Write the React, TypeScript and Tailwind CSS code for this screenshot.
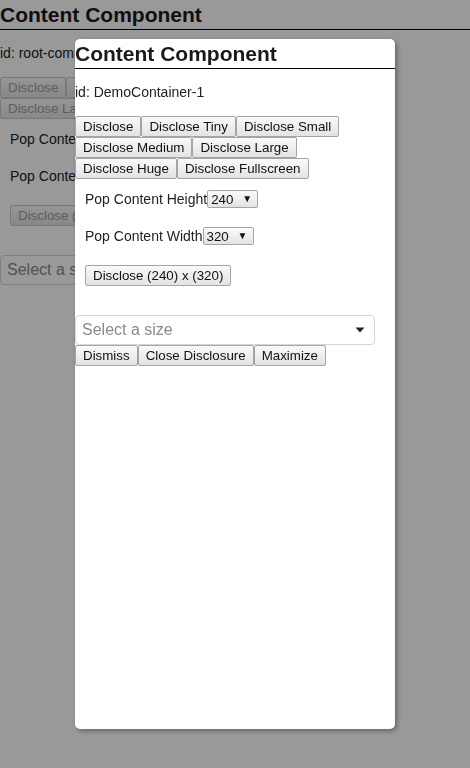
import React from "react";

const FONT = "font-['Liberation_Sans',Arial,sans-serif]";

function Btn({ children, disabled }: { children: React.ReactNode; disabled?: boolean }) {
  return (
    <button
      className={
        "h-[21px] px-[7px] py-0 border rounded-[2px] text-[13.33px] leading-[15px] whitespace-nowrap bg-gradient-to-b from-[#fafafa] to-[#e3e3e3] " +
        FONT +
        (disabled ? " border-[#c8c8c8] text-[#9c9c9c]" : " border-[#a5a5a5] text-[#111]")
      }
    >
      {children}
    </button>
  );
}

function MiniSelect({ value }: { value: string }) {
  return (
    <div className="flex h-[18px] w-[51px] items-center justify-between rounded-[2px] border border-[#a5a5a5] bg-gradient-to-b from-[#fafafa] to-[#e3e3e3] pl-[3px] pr-[5px] text-[13.33px] leading-[15px] text-[#111]">
      <span>{value}</span>
      <span className="text-[10px] leading-[10px]">▼</span>
    </div>
  );
}

function Content({ id, disabled, actions }: { id: string; disabled?: boolean; actions?: boolean }) {
  return (
    <div className={"text-[#222] " + FONT}>
      <div className="h-[30px] border-b border-black pt-[3px] text-[21px] font-bold leading-[24px] text-[#1a1a1a] whitespace-nowrap">
        Content Component
      </div>
      <div className="mt-[15px] text-[14px] leading-[16px] whitespace-nowrap">id: {id}</div>
      <div className="mt-[16px] flex flex-wrap">
        <Btn disabled={disabled}>Disclose</Btn>
        <Btn disabled={disabled}>Disclose Tiny</Btn>
        <Btn disabled={disabled}>Disclose Small</Btn>
        <Btn disabled={disabled}>Disclose Medium</Btn>
        <Btn disabled={disabled}>Disclose Large</Btn>
        <Btn disabled={disabled}>Disclose Huge</Btn>
        <Btn disabled={disabled}>Disclose Fullscreen</Btn>
      </div>
      <div className="pl-[10px] pt-[11px] text-[14px] leading-[16px]">
        <div className="flex h-[18px] items-center whitespace-nowrap">
          <span>Pop Content Height</span>
          <MiniSelect value="240" />
        </div>
        <div className="mt-[19px] flex h-[18px] items-center whitespace-nowrap">
          <span>Pop Content Width</span>
          <MiniSelect value="320" />
        </div>
        <div className="mt-[20px] flex">
          <Btn disabled={disabled}>Disclose (240) x (320)</Btn>
        </div>
      </div>
      <div className="mt-[29px] flex h-[30px] w-[300px] items-center justify-between rounded-[4px] border border-[#d6d6d6] bg-white pl-[6px] pr-[9px]">
        <span className="text-[16px] leading-[18px] text-[#8a8a8a] whitespace-nowrap">Select a size</span>
        <svg width="10" height="6" viewBox="0 0 10 6">
          <path d="M0.5 0.5 L9.5 0.5 L5 5.5 Z" fill="#222" />
        </svg>
      </div>
      {actions && (
        <div className="flex">
          <Btn>Dismiss</Btn>
          <Btn>Close Disclosure</Btn>
          <Btn>Maximize</Btn>
        </div>
      )}
    </div>
  );
}

export default function App() {
  return (
    <div className="relative h-[768px] w-[470px] overflow-hidden bg-white">
      <Content id="root-component" disabled />
      <div className="fixed inset-0 bg-black/40" />
      <div className="fixed left-[75px] top-[39px] h-[690px] w-[320px] overflow-hidden rounded-[5px] bg-white shadow-[2px_2px_5px_rgba(0,0,0,0.35)]">
        <Content id="DemoContainer-1" actions />
      </div>
    </div>
  );
}
